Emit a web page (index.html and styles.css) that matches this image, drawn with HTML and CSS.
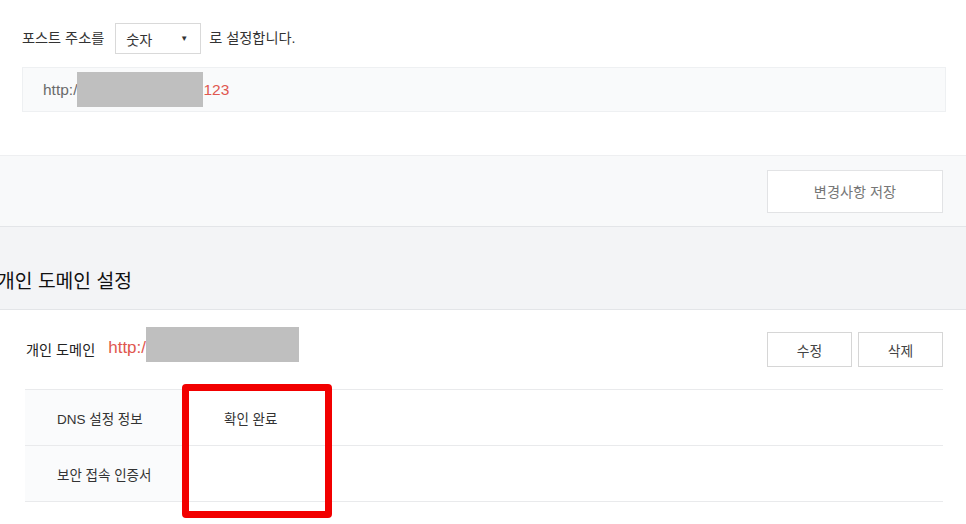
FILE: index.html
```html
<!DOCTYPE html>
<html lang="ko">
<head>
<meta charset="utf-8">
<title>개인 도메인 설정</title>
<link rel="stylesheet" href="styles.css">
</head>
<body>
<section class="post-section">
  <div class="post-row">
    <span class="label">포스트 주소를</span>
    <div class="select"><span>숫자</span><span class="caret">▼</span></div>
    <span class="label">로 설정합니다.</span>
  </div>
  <div class="url-box">
    <span class="url-gray">http:/</span><span class="mask mask-url"></span><span class="url-red">123</span>
  </div>
</section>

<div class="save-bar">
  <button class="btn btn-save">변경사항 저장</button>
</div>

<div class="section-head">
  <h2>개인 도메인 설정</h2>
</div>

<section class="domain-section">
  <div class="domain-row">
    <div class="domain-left">
      <span class="domain-label">개인 도메인</span>
      <span class="domain-url">http:/</span><span class="mask mask-domain"></span>
    </div>
    <div class="domain-actions">
      <button class="btn btn-small">수정</button>
      <button class="btn btn-small">삭제</button>
    </div>
  </div>
  <div class="info-table">
    <div class="info-row">
      <div class="info-key">DNS 설정 정보</div>
      <div class="info-val">확인 완료</div>
    </div>
    <div class="info-row">
      <div class="info-key">보안 접속 인증서</div>
      <div class="info-val"></div>
    </div>
  </div>
</section>

<div class="highlight"></div>
</body>
</html>
```

FILE: styles.css
```css
* { box-sizing: border-box; }

body {
  margin: 0;
  font-family: "Liberation Sans", "Noto Sans CJK KR", sans-serif;
  font-size: 13px;
  color: #333;
  background: #fff;
  position: relative;
  overflow: hidden;
  height: 524px;
}

.post-section {
  height: 155px;
  padding: 23px 21px 0 22px;
}

.post-row {
  display: flex;
  align-items: center;
  height: 31px;
}

.label {
  font-size: 14.2px;
  color: #333;
  line-height: 31px;
}

.select {
  width: 86px;
  height: 31px;
  margin: 0 8px 0 11px;
  border: 1px solid #d9d9d9;
  display: flex;
  align-items: center;
  justify-content: space-between;
  padding: 0 12px 0 10px;
  font-size: 14.2px;
  color: #333;
}

.caret {
  font-size: 8px;
  color: #333;
}

.url-box {
  margin-top: 13px;
  height: 45px;
  width: 924px;
  background: #f9fafb;
  border: 1px solid #eef0f2;
  display: flex;
  align-items: center;
  padding-left: 20px;
  font-size: 15.5px;
}

.url-gray { color: #6a6a6a; }
.url-red { color: #e0574f; }

.mask {
  display: inline-block;
  background: #bfbfbf;
}

.mask-url {
  width: 126px;
  height: 35px;
}

.save-bar {
  height: 72px;
  border-top: 1px solid #eeeff1;
  border-bottom: 1px solid #e3e5e8;
  background: #f8f9fa;
  display: flex;
  justify-content: flex-end;
  align-items: center;
  padding-right: 23px;
}

.btn {
  font-family: inherit;
  background: #fff;
  border: 1px solid #dcdcdc;
  color: #555;
  cursor: pointer;
}

.btn-save {
  width: 176px;
  height: 43px;
  font-size: 14.2px;
  color: #777;
  border-color: #e2e3e5;
}

.section-head {
  height: 83px;
  background: #f3f4f6;
  border-bottom: 1px solid #e3e5e8;
  display: flex;
  align-items: flex-end;
  padding-bottom: 16px;
}

.section-head h2 {
  margin: 0 0 0 -3px;
  font-size: 19.3px;
  font-weight: 400;
  color: #111;
  line-height: 26px;
  font-family: "Noto Sans CJK KR", sans-serif;
}

.domain-section {
  padding: 22px 23px 0 25px;
}

.domain-row {
  display: flex;
  justify-content: space-between;
  align-items: flex-start;
  height: 35px;
}

.domain-left {
  display: flex;
  align-items: center;
  margin-top: -5px;
  height: 35px;
}

.domain-label {
  font-size: 14.2px;
  color: #222;
  margin: 8px 13px 0 1px;
}

.domain-url {
  color: #e0574f;
  font-size: 17px;
  margin-top: 6px;
}

.mask-domain {
  width: 153px;
  height: 35px;
}

.domain-actions {
  display: flex;
  gap: 6px;
}

.btn-small {
  width: 85px;
  height: 35px;
  font-size: 13.8px;
  color: #444;
  border-color: #d6d6d6;
}

.info-table {
  margin-top: 22px;
  border-top: 1px solid #e9eaec;
}

.info-row {
  display: flex;
  height: 56px;
  border-bottom: 1px solid #e9eaec;
}

.info-key {
  width: 158px;
  background: #fafbfc;
  padding-left: 32px;
  display: flex;
  align-items: center;
  font-size: 13.5px;
  color: #333;
}

.info-val {
  flex: 1;
  padding-left: 41px;
  display: flex;
  align-items: center;
  font-size: 13.5px;
  color: #333;
}

.highlight {
  position: absolute;
  left: 182px;
  top: 384px;
  width: 150px;
  height: 134px;
  border: 7px solid #f20000;
  border-radius: 4px;
}
```
